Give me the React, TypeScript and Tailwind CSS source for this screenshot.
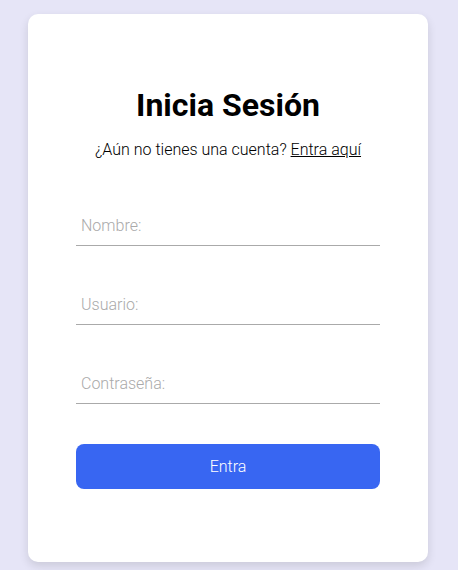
export default function App() {
  return (
    <div className="min-h-[570px] bg-[#e6e5f7] pt-[14px] pl-[28px] font-['Roboto',sans-serif]">
      <div className="w-[400px] rounded-[10px] bg-white px-12 pt-[72px] pb-[73px] shadow-[0_4px_10px_rgba(0,0,0,0.12)]">
        <h1 className="text-center text-[32px] leading-[38px] font-bold text-black">Inicia Sesión</h1>
        <p className="mt-[14px] text-center text-base leading-6 font-light text-black">
          ¿Aún no tienes una cuenta?{" "}
          <a href="#" className="underline">
            Entra aquí
          </a>
        </p>
        <form className="mt-[44px] flex flex-col gap-[39px]" onSubmit={(e) => e.preventDefault()}>
          <input
            type="text"
            placeholder="Nombre:"
            className="h-10 w-full border-b border-[#aaaaaa] px-[5px] text-base font-light outline-none placeholder:text-[#aaaaaa]"
          />
          <input
            type="text"
            placeholder="Usuario:"
            className="h-10 w-full border-b border-[#aaaaaa] px-[5px] text-base font-light outline-none placeholder:text-[#aaaaaa]"
          />
          <input
            type="password"
            placeholder="Contraseña:"
            className="h-10 w-full border-b border-[#aaaaaa] px-[5px] text-base font-light outline-none placeholder:text-[#aaaaaa]"
          />
          <button
            type="submit"
            className="mt-px h-[45px] w-full rounded-lg bg-[#3866f2] text-base font-light text-white"
          >
            Entra
          </button>
        </form>
      </div>
    </div>
  );
}
